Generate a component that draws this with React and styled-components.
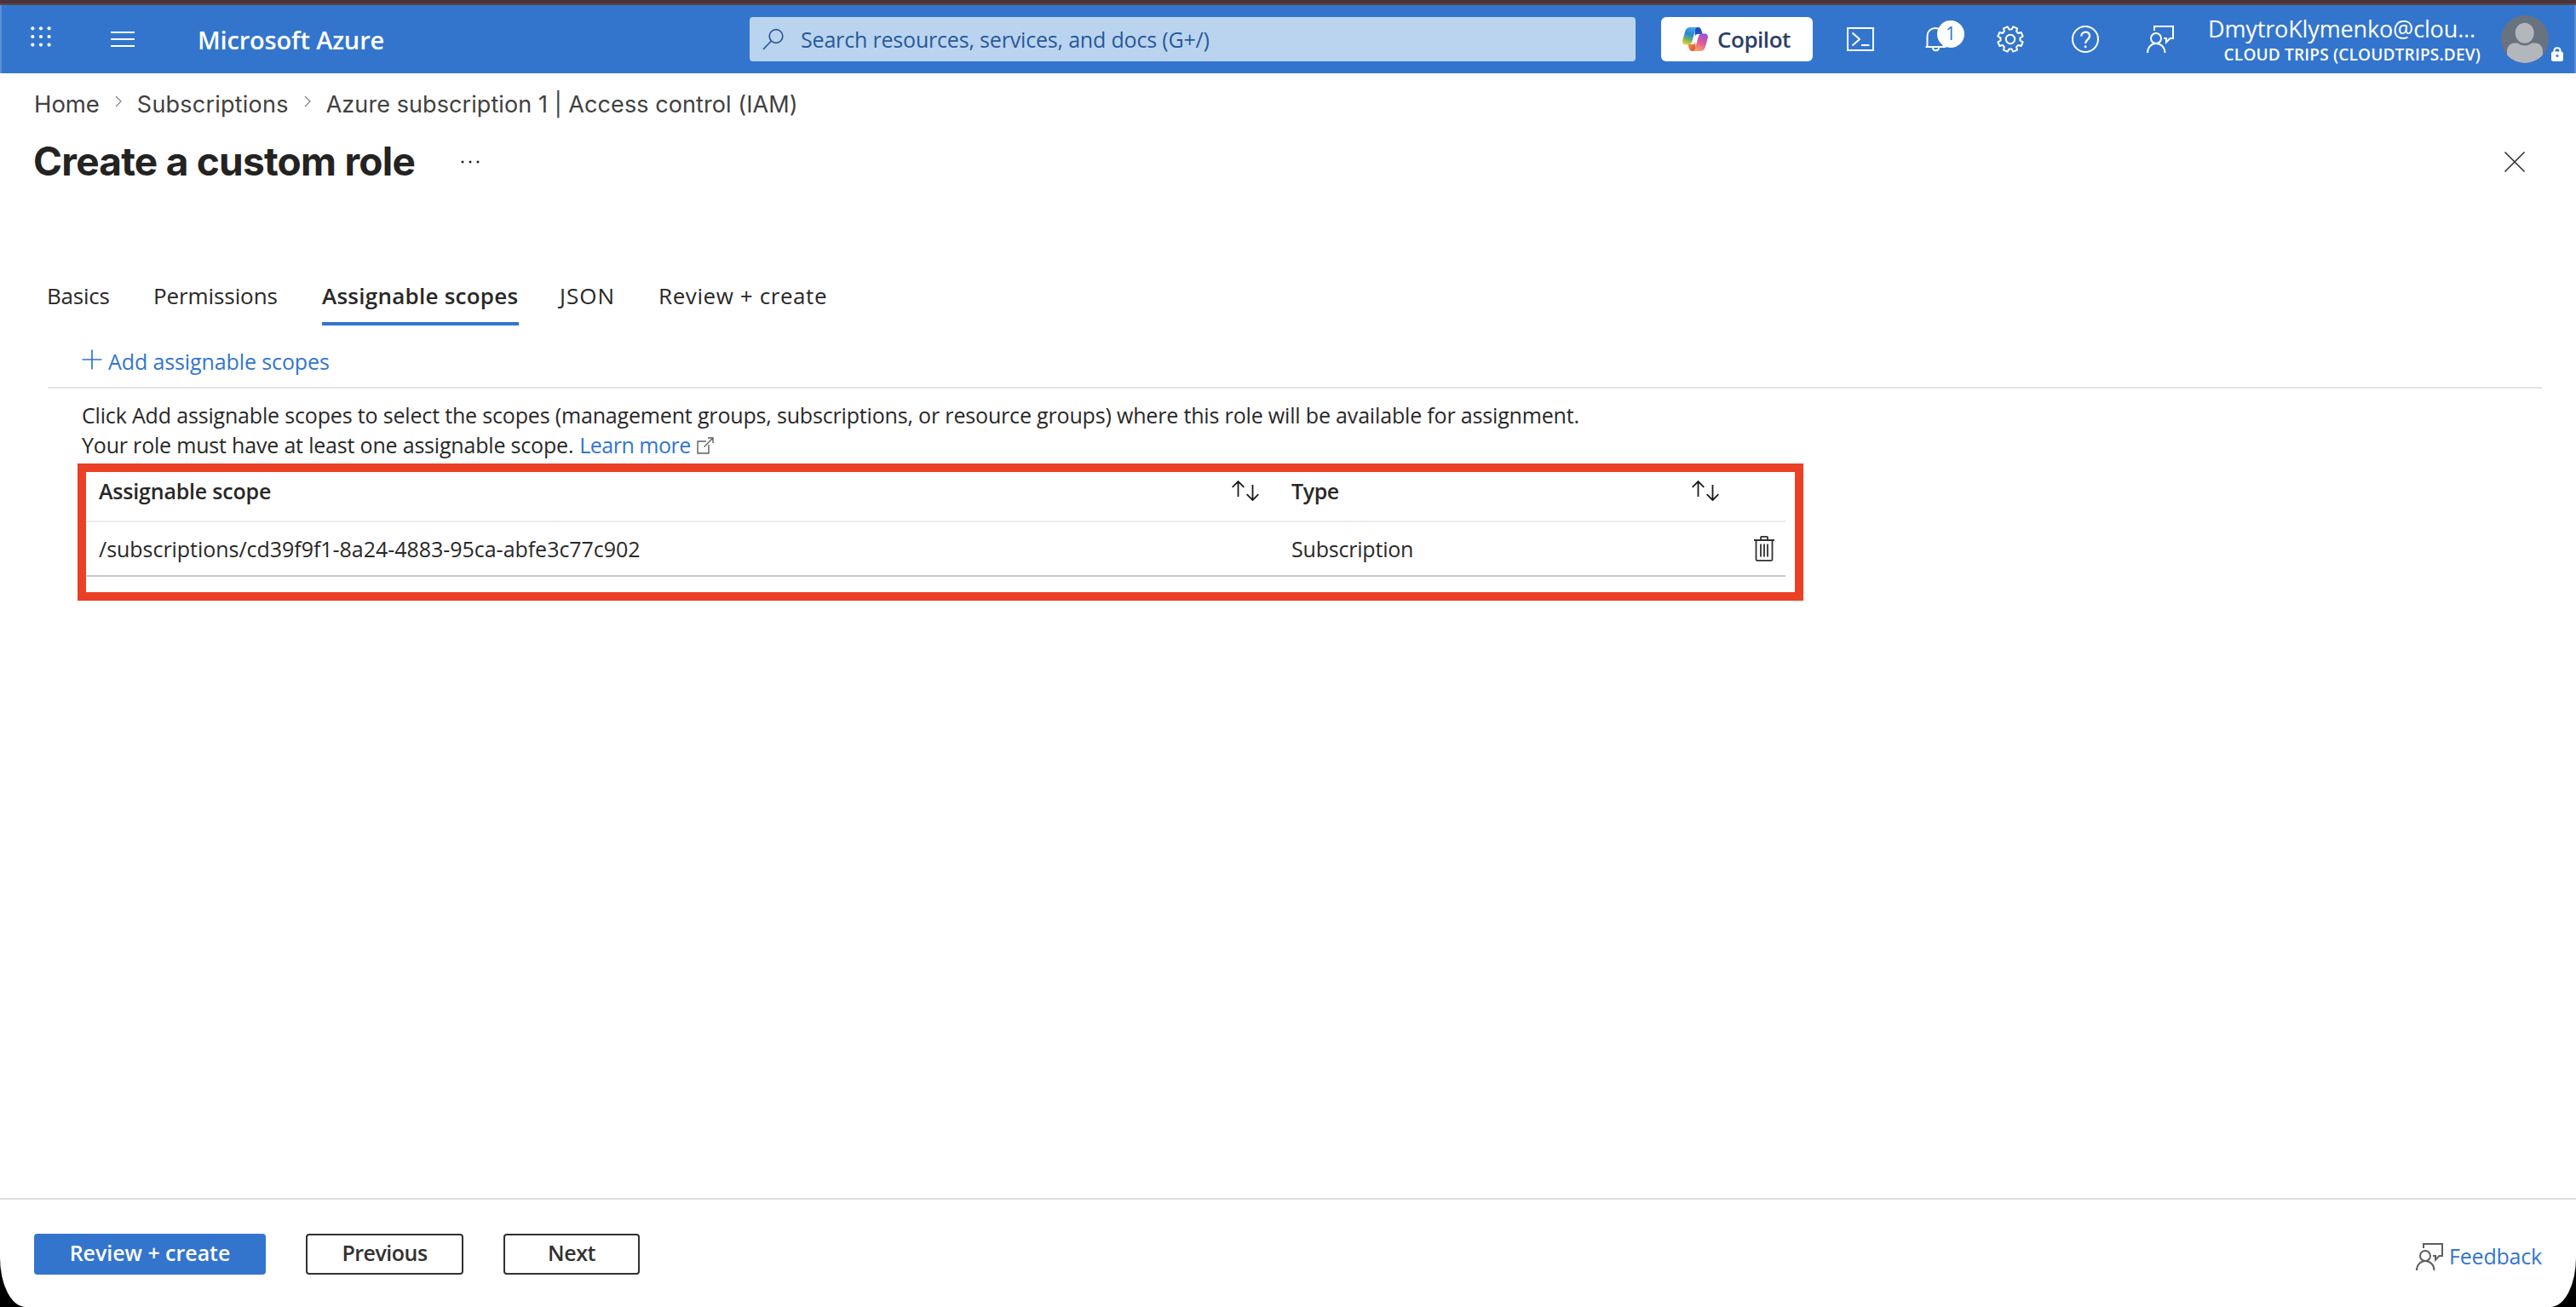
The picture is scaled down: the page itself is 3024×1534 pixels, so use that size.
import React, { useState } from "react";
import styled, { createGlobalStyle } from "styled-components";

const tabs = [
  { id: "basics", label: "Basics", width: 77, ls: -0.25 },
  { id: "permissions", label: "Permissions", width: 150, ls: -0.09 },
  { id: "scopes", label: "Assignable scopes", width: 231, ls: 0.25 },
  { id: "json", label: "JSON", width: 68, ls: 1 },
  { id: "review", label: "Review + create", width: 199, ls: 0.59 },
];

const scopes = [
  { path: "/subscriptions/cd39f9f1-8a24-4883-95ca-abfe3c77c902", type: "Subscription" },
];

// gear outline, 8 teeth
const gearPoints = () => {
  const pts = [];
  for (let i = 0; i < 8; i++) {
    const mid = 22.5 + i * 45;
    [
      [-15, 11.6],
      [-10, 15],
      [10, 15],
      [15, 11.6],
    ].forEach(([d, r]) => {
      const a = ((mid + d) * Math.PI) / 180;
      pts.push(`${(16 + r * Math.sin(a)).toFixed(2)},${(16 - r * Math.cos(a)).toFixed(2)}`);
    });
  }
  return pts.join(" ");
};

const WaffleIcon = () => (
  <svg width="24" height="30" viewBox="0 0 24 30" fill="#fff">
    {[2.3, 12, 21.6].map((y) => [2.3, 12, 21.6].map((x) => <circle key={`${x}-${y}`} cx={x} cy={y} r="2.1" />))}
  </svg>
);

const MenuIcon = () => (
  <svg width="28" height="20" viewBox="0 0 28 20" fill="#fff">
    <rect y="1" width="28" height="2" />
    <rect y="9" width="28" height="2" />
    <rect y="17" width="28" height="2" />
  </svg>
);

const SearchIcon = () => (
  <svg width="26" height="26" viewBox="0 0 26 26" fill="none" stroke="#29599a" strokeWidth="1.7">
    <circle cx="16" cy="9.5" r="7.8" />
    <path d="M10.5 15L1 24.8" />
  </svg>
);

const CopilotIcon = () => (
  <svg width="30" height="28" viewBox="0 0 30 28">
    <defs>
      <linearGradient id="cpBlue" x1="0.6" y1="0" x2="0.3" y2="1">
        <stop offset="0" stopColor="#41a7e8" />
        <stop offset="0.4" stopColor="#2c85d6" />
        <stop offset="0.7" stopColor="#69b36a" />
        <stop offset="1" stopColor="#f3cf2d" />
      </linearGradient>
      <linearGradient id="cpPink" x1="0.7" y1="0" x2="0.3" y2="1">
        <stop offset="0" stopColor="#9a4fe0" />
        <stop offset="0.5" stopColor="#dd5c93" />
        <stop offset="1" stopColor="#f9a765" />
      </linearGradient>
      <linearGradient id="cpNavy" x1="0" y1="0" x2="1" y2="1">
        <stop offset="0" stopColor="#1b3fae" />
        <stop offset="1" stopColor="#2a63d6" />
      </linearGradient>
      <linearGradient id="cpRed" x1="0" y1="0" x2="1" y2="1">
        <stop offset="0" stopColor="#f3a13c" />
        <stop offset="1" stopColor="#d8453c" />
      </linearGradient>
    </defs>
    <path d="M14 0h4.5c2 0 3 1.2 3.600 3L23.700 8H18c-1.800 0-2.600 1-3 2.600z" fill="url(#cpNavy)" />
    <path d="M16 28h-4.500c-2 0-3-1.200-3.600-3L6.300 20H12c1.800 0 2.600-1 3-2.600z" fill="url(#cpRed)" />
    <path d="M9 0h9c-1.700.5-2.500 1.800-3 3.500L11.500 16c-.8 2.800-2 4.500-4.500 4.500H3.500C.7 20.500-.4 18 .3 15L3.300 4.500C4.200 1.500 6 0 9 0z" fill="url(#cpBlue)" />
    <path d="M21 28h-9c1.700-.5 2.500-1.800 3-3.500L18.500 12c.8-2.800 2-4.500 4.500-4.500h3.500c2.800 0 3.900 2.500 3.200 5.500l-3 10.500C25.800 26.500 24 28 21 28z" fill="url(#cpPink)" />
  </svg>
);

const ShellIcon = () => (
  <svg width="32" height="28" viewBox="0 0 32 28" fill="none" stroke="#fff" strokeWidth="2">
    <rect x="1" y="1" width="30" height="26" />
    <path d="M6.500 6.500L15 14l-8.500 7.500M17 21h9.500" />
  </svg>
);

const BellIcon = () => (
  <svg width="32" height="32" viewBox="0 0 32 32" fill="none" stroke="#fff" strokeWidth="2">
    <path d="M4.500 25h24M6.500 25V12c0-5 4-9 9.500-9s9.500 4 9.500 9v13" />
    <path d="M13 25.500c0 5 7 5 7 0" />
  </svg>
);

const GearIcon = () => (
  <svg width="32" height="32" viewBox="0 0 32 32" fill="none" stroke="#fff" strokeWidth="2">
    <polygon points={gearPoints()} strokeLinejoin="round" />
    <circle cx="16" cy="16" r="5.2" />
  </svg>
);

const HelpIcon = () => (
  <svg width="32" height="32" viewBox="0 0 32 32" fill="none" stroke="#fff" strokeWidth="2">
    <circle cx="16" cy="16" r="15" />
    <path d="M11.300 12.500c0-6.500 9.800-6.500 9.800-.3 0 4-5 4.300-5 8.800" strokeWidth="2.3" />
    <circle cx="16.1" cy="24.8" r="1.5" fill="#fff" stroke="none" />
  </svg>
);

const FeedbackIcon = ({ color }) => (
  <svg width="32" height="32" viewBox="0 0 32 32" fill="none" stroke={color} strokeWidth="2">
    <path d="M9 6V1h22v14h-3.500l-4.500 4.500V15h-3" />
    <circle cx="11" cy="15" r="6" />
    <path d="M1 32c0-6.500 4.500-11 10-11s10.500 4.500 10.500 11" />
  </svg>
);

const Avatar = () => (
  <svg width="56" height="56" viewBox="0 0 56 56">
    <clipPath id="face">
      <circle cx="28" cy="28" r="28" />
    </clipPath>
    <g clipPath="url(#face)">
      <rect width="56" height="56" fill="#68737f" />
      <path d="M7 58V42c0-5.500 4-9.500 9-9.500h24c5 0 9 4 9 9.500v16z" fill="#b3b6bb" />
      <ellipse cx="27.7" cy="22" rx="13" ry="13.5" fill="#68737f" />
      <ellipse cx="27.7" cy="20.8" rx="11" ry="12" fill="#b3b6bb" />
    </g>
  </svg>
);

const LockIcon = () => (
  <svg width="14" height="17" viewBox="0 0 14 17">
    <path d="M3.500 7V4.500C3.500 0 10.500 0 10.500 4.500V7" fill="none" stroke="#fff" strokeWidth="2" />
    <rect y="5.5" width="14" height="11.5" rx="2.5" fill="#fff" />
    <circle cx="7" cy="10.5" r="1.5" fill="#3375cd" />
  </svg>
);

const ChevronIcon = () => (
  <svg width="8" height="14" viewBox="0 0 8 14" fill="none" stroke="#8a8886" strokeWidth="1.3">
    <path d="M1 1l6 6-6 6" />
  </svg>
);

const MoreIcon = () => (
  <svg width="22" height="4" viewBox="0 0 22 4" fill="#252423">
    <circle cx="2" cy="2" r="1.5" />
    <circle cx="11" cy="2" r="1.5" />
    <circle cx="20" cy="2" r="1.5" />
  </svg>
);

const CloseIcon = () => (
  <svg width="24" height="24" viewBox="0 0 24 24" fill="none" stroke="#323130" strokeWidth="1.6">
    <path d="M.5.5l23 23M23.500.5l-23 23" />
  </svg>
);

const PlusIcon = () => (
  <svg width="24" height="24" viewBox="0 0 24 24" fill="none" stroke="#3375cd" strokeWidth="1.7">
    <path d="M12 .5v23M.5 12h23" />
  </svg>
);

const ExternalIcon = () => (
  <svg width="20" height="20" viewBox="0 0 20 20" fill="none" stroke="#605e5c" strokeWidth="1.4">
    <path d="M11 5H1v14h13V9M13 1h6v6M19 1L8.500 11.500" />
  </svg>
);

const SortIcon = () => (
  <svg width="32" height="26" viewBox="0 0 32 26" fill="none" stroke="#1b1a19" strokeWidth="1.8">
    <path d="M7.500 20V2M.7 8.800L7.500 2l6.800 6.800M24.500 6v18M17.700 17.200l6.800 6.800 6.800-6.800" />
  </svg>
);

const TrashIcon = () => (
  <svg width="24" height="30" viewBox="0 0 24 30" fill="none" stroke="#323130" strokeWidth="1.8">
    <path d="M0 5h24M8 5V1.800c0-.5.3-.9.9-.9h6.200c.6 0 .9.4.9.9V5M2.500 5v22.500c0 .8.5 1.300 1.300 1.300h16.400c.8 0 1.300-.5 1.300-1.300V5M8 9.500v15M12 9.500v15M16 9.500v15" />
  </svg>
);

const App = () => {
  const [tab, setTab] = useState("scopes");

  return (
    <>
      <GlobalStyle />
      <Page>
        <WindowEdge />
        <TopBar>
          <BarLeft>
            <WaffleIcon />
            <MenuIcon />
            <Brand>Microsoft Azure</Brand>
          </BarLeft>
          <SearchBox>
            <SearchIcon />
            <Label $ls={-0.18}>Search resources, services, and docs (G+/)</Label>
          </SearchBox>
          <CopilotBtn>
            <CopilotIcon />
            <Label $ls={-0.48}>Copilot</Label>
          </CopilotBtn>
          <IconBar>
            <ShellIcon />
            <BellBox>
              <BellIcon />
              <Badge>1</Badge>
            </BellBox>
            <GearIcon />
            <HelpIcon />
            <FeedbackIcon color="#fff" />
          </IconBar>
          <Account>
            <Email>DmytroKlymenko@clou...</Email>
            <Tenant>CLOUD TRIPS (CLOUDTRIPS.DEV)</Tenant>
          </Account>
          <Avatar />
          <LockBox>
            <LockIcon />
          </LockBox>
        </TopBar>

        <Breadcrumb>
          <Crumb $ls={-0.05} $size={27.5}>Home</Crumb>
          <ChevronIcon />
          <Crumb $ls={0.22}>Subscriptions</Crumb>
          <ChevronIcon />
          <Crumb $ls={0.08}>Azure subscription 1 | Access control (IAM)</Crumb>
        </Breadcrumb>

        <TitleRow>
          <Title>Create a custom role</Title>
          <MoreIcon />
          <CloseBtn>
            <CloseIcon />
          </CloseBtn>
        </TitleRow>

        <TabList>
          {tabs.map((t) => (
            <Tab key={t.id} $active={t.id === tab} $width={t.width} $ls={t.ls} onClick={() => setTab(t.id)}>
              {t.label}
            </Tab>
          ))}
        </TabList>

        <Toolbar>
          <AddBtn>
            <PlusIcon />
            <Label $ls={-0.11}>Add assignable scopes</Label>
          </AddBtn>
        </Toolbar>

        <Description>
          <Line $ls={-0.169}>
            Click Add assignable scopes to select the scopes (management groups, subscriptions, or resource groups)
            where this role will be available for assignment.
          </Line>
          <Line $ls={-0.19}>
            Your role must have at least one assignable scope.
            <Link>Learn more</Link>
            <ExternalIcon />
          </Line>
        </Description>

        <Highlight>
          <HeadRow>
            <Label $ls={-0.2}>Assignable scope</Label>
            <SortIcon />
            <Label $ls={-0.4}>Type</Label>
            <SortIcon />
          </HeadRow>
          {scopes.map((s) => (
            <Row key={s.path}>
              <Label $ls={-0.034}>{s.path}</Label>
              <span />
              <Label $ls={-0.2}>{s.type}</Label>
              <span />
              <TrashIcon />
            </Row>
          ))}
        </Highlight>

        <Footer>
          <Button $primary $width={272} $ls={-0.03}>Review + create</Button>
          <Button $width={185} $ls={-0.5}>Previous</Button>
          <Button $width={160} $ls={-0.4}>Next</Button>
          <Feedback>
            <FeedbackIcon color="#605e5c" />
            <Label $ls={-0.2}>Feedback</Label>
          </Feedback>
        </Footer>
      </Page>
    </>
  );
};

const GlobalStyle = createGlobalStyle`
  * {
    box-sizing: border-box;
  }

  body {
    margin: 0;
    background-color: #000;
    font-family: "Open Sans", sans-serif;
    font-size: 25px;
    color: #292827;
  }

  svg {
    display: block;
    flex-shrink: 0;
    overflow: visible;
  }
`;

const Page = styled.div`
  display: flex;
  flex-direction: column;
  width: 3024px;
  height: 1534px;
  overflow: hidden;
  background-color: #fff;
  border-radius: 0 0 30px 30px / 0 0 58px 58px;
`;

const WindowEdge = styled.div`
  height: 6px;
  flex-shrink: 0;
  background-color: #4c333a;
  border-bottom: 2px solid #56474a;
`;

const Label = styled.span`
  letter-spacing: ${({ $ls }) => $ls || 0}px;
  white-space: nowrap;
`;

const TopBar = styled.header`
  display: flex;
  align-items: center;
  height: 80px;
  flex-shrink: 0;
  background-color: #3375cd;
  border: solid #5b8fd6;
  border-width: 0 2px;
`;

const BarLeft = styled.div`
  display: flex;
  align-items: center;
  width: 878px;
  padding-left: 34px;

  svg + svg {
    margin-left: 70px;
  }
`;

const Brand = styled.div`
  margin-left: 74px;
  padding-top: 2px;
  color: #fff;
  font-size: 29px;
  font-weight: 600;
  line-height: 40px;
  letter-spacing: -0.16px;
`;

const SearchBox = styled.div`
  display: flex;
  align-items: center;
  gap: 19px;
  width: 1040px;
  height: 52px;
  padding-left: 15px;
  border-radius: 4px;
  background-color: #bad4ef;
  color: #29599a;
`;

const CopilotBtn = styled.div`
  display: flex;
  align-items: center;
  gap: 11px;
  width: 178px;
  height: 52px;
  margin-left: 30px;
  padding-left: 25px;
  border-radius: 6px;
  background-color: #fff;
  color: #2b4065;
  font-size: 26px;
  font-weight: 600;
`;

const IconBar = styled.div`
  display: flex;
  align-items: center;
  gap: 56px;
  margin-left: 40px;
`;

const BellBox = styled.div`
  position: relative;
`;

const Badge = styled.span`
  position: absolute;
  top: -6px;
  left: 18px;
  width: 32px;
  height: 32px;
  border-radius: 16px;
  background-color: #fff;
  color: #3375cd;
  font-size: 21px;
  line-height: 30px;
  text-align: center;
`;

const Account = styled.div`
  display: flex;
  flex-direction: column;
  width: 320px;
  margin: 0 24px 0 40px;
  color: #fff;
`;

const Email = styled.div`
  height: 36px;
  font-size: 27px;
  line-height: 37px;
  letter-spacing: -0.14px;
`;

const Tenant = styled.div`
  align-self: flex-end;
  font-size: 19px;
  font-weight: 600;
  line-height: 26px;
  letter-spacing: 0.2px;
`;

const LockBox = styled.div`
  margin: 34px 0 0 3px;
`;

const Breadcrumb = styled.nav`
  display: flex;
  align-items: center;
  height: 72px;
  flex-shrink: 0;
  padding-left: 40px;
  color: #424140;

  svg {
    margin: -6px 18px 0;
  }
`;

const Crumb = styled.span`
  font-family: "Inter", sans-serif;
  font-size: ${({ $size }) => $size || 27}px;
  letter-spacing: ${({ $ls }) => $ls}px;
`;

const TitleRow = styled.div`
  display: flex;
  align-items: center;
  height: 64px;
  flex-shrink: 0;
  padding: 0 60px 0 39px;
`;

const Title = styled.h1`
  margin: 0 54px 2px 0;
  font-family: "Inter", sans-serif;
  font-size: 46px;
  font-weight: 650;
  letter-spacing: -0.75px;
  color: #242322;
`;

const CloseBtn = styled.div`
  margin-left: auto;
`;

const TabList = styled.div`
  display: flex;
  gap: 48px;
  margin: 92px 0 0 55px;
`;

const Tab = styled.div`
  width: ${({ $width }) => $width}px;
  height: 68px;
  font-size: 26px;
  font-weight: ${({ $active }) => ($active ? 600 : 400)};
  line-height: 67px;
  letter-spacing: ${({ $ls }) => $ls}px;
  white-space: nowrap;
  box-shadow: ${({ $active }) => ($active ? "inset 0 -4px 0 #3375cd" : "none")};
`;

const Toolbar = styled.div`
  display: flex;
  height: 74px;
  flex-shrink: 0;
  margin: 0 40px 0 56px;
  padding: 24px 0 0 40px;
  border-bottom: 2px solid #e3e3e3;
`;

const AddBtn = styled.div`
  display: flex;
  gap: 7px;
  color: #3375cd;
  line-height: 36px;

  svg {
    margin-top: 4px;
  }
`;

const Description = styled.div`
  margin: 14px 0 4px 96px;
`;

const Line = styled.div`
  display: flex;
  height: 35px;
  line-height: 34px;
  letter-spacing: ${({ $ls }) => $ls}px;
  white-space: nowrap;

  svg {
    margin: 8px 0 0 7px;
  }
`;

const Link = styled.a`
  margin-left: 7px;
  color: #3375cd;
  letter-spacing: -0.5px;
`;

const Highlight = styled.section`
  width: 2026px;
  height: 161px;
  flex-shrink: 0;
  margin-left: 91px;
  border: 10px solid #eb4026;
`;

const Row = styled.div`
  display: grid;
  grid-template-columns: 1330px 70px 470px 73px 24px;
  align-items: center;
  width: 1995px;
  height: 64px;
  padding-left: 15px;
  border-bottom: 2px solid #c9c9c9;
`;

const HeadRow = styled(Row)`
  height: 59px;
  padding-bottom: 13px;
  border-bottom-color: #ebebeb;
  font-weight: 600;
`;

const Footer = styled.footer`
  display: flex;
  align-items: flex-start;
  height: 128px;
  margin-top: auto;
  padding: 40px 40px 0;
  border-top: 2px solid #dedede;
`;

const Button = styled.button`
  width: ${({ $width }) => $width}px;
  height: 48px;
  margin-right: 47px;
  padding: 0 0 4px;
  border: 2px solid ${({ $primary }) => ($primary ? "#3375cd" : "#323130")};
  border-radius: 4px;
  background-color: ${({ $primary }) => ($primary ? "#3375cd" : "#fff")};
  color: ${({ $primary }) => ($primary ? "#fff" : "#323130")};
  font-family: inherit;
  font-size: 25px;
  font-weight: 600;
  line-height: 36px;
  letter-spacing: ${({ $ls }) => $ls}px;
`;

const Feedback = styled.div`
  display: flex;
  gap: 7px;
  margin-left: auto;
  padding-top: 8px;
  color: #3375cd;
  line-height: 36px;

  svg {
    margin-top: 3px;
  }
`;

export default App;
